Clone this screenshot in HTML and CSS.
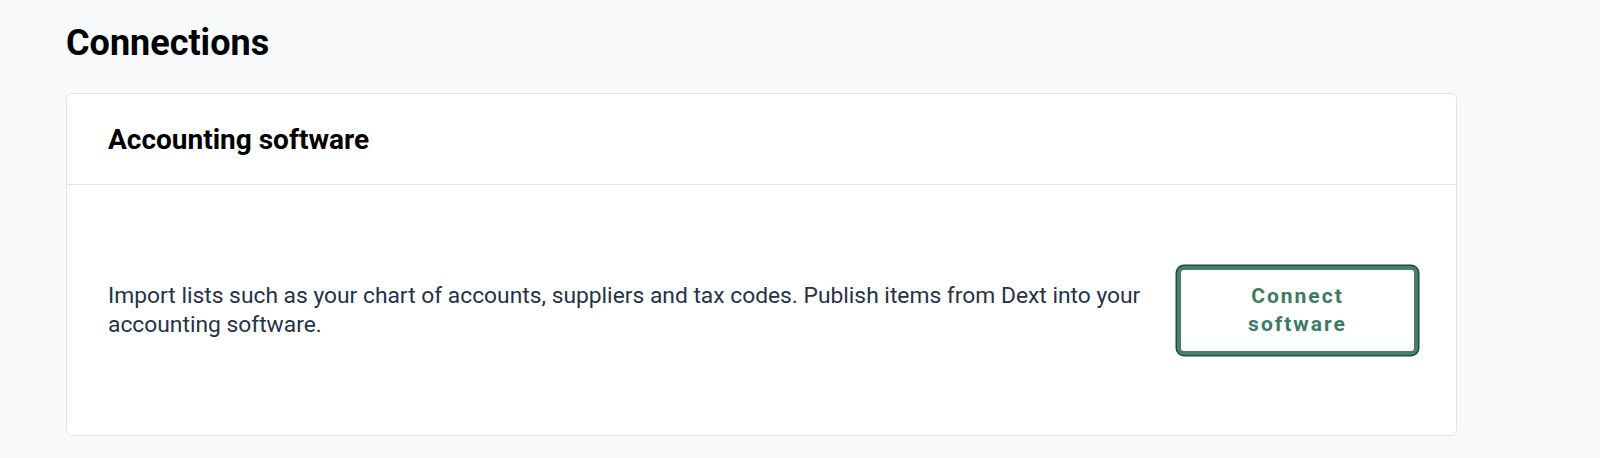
FILE: index.html
```html
<!DOCTYPE html>
<html lang="en">
<head>
<meta charset="utf-8">
<title>Connections</title>
<link rel="stylesheet" href="styles.css">
</head>
<body>
<main class="page">
  <h1 class="page-title">Connections</h1>
  <section class="card">
    <header class="card-header">
      <h2 class="card-title">Accounting software</h2>
    </header>
    <div class="card-body">
      <p class="card-text">Import lists such as your chart of accounts, suppliers and tax codes. Publish items from Dext into your accounting software.</p>
      <button class="btn-connect" type="button">Connect software</button>
    </div>
  </section>
</main>
</body>
</html>
```
FILE: styles.css
```css
* { box-sizing: border-box; }
html, body {
  margin: 0;
  padding: 0;
  background: #f8f9fb;
  font-family: Roboto, "Liberation Sans", Arial, sans-serif;
}
.page {
  padding: 21px 0 0 66px;
}
.page-title {
  margin: 0 0 28px;
  font-size: 36px;
  line-height: 44px;
  font-weight: 700;
  color: #000;
}
.card {
  width: 1391px;
  background: #fff;
  border: 1px solid #e1e3e9;
  border-radius: 6px;
}
.card-header {
  height: 91px;
  display: flex;
  align-items: center;
  padding: 0 41px;
  border-bottom: 1px solid #e1e3e9;
}
.card-title {
  margin: 0;
  font-size: 28px;
  font-weight: 700;
  color: #000;
}
.card-body {
  height: 250px;
  display: flex;
  align-items: center;
  justify-content: space-between;
  gap: 30px;
  padding: 0 38px 0 41px;
}
.card-text {
  margin: 0;
  flex: 1 1 auto;
  font-size: 22.8px;
  line-height: 29px;
  color: #263247;
}
.btn-connect {
  flex: none;
  width: 241px;
  height: 89px;
  padding: 0 30px;
  background: #fff;
  border: 4px solid #4a8068;
  border-radius: 7px;
  box-shadow: 0 0 0 1.5px #1f4c3a;
  color: #3d7a62;
  font-family: inherit;
  font-size: 21px;
  font-weight: 700;
  letter-spacing: 2px;
  line-height: 28px;
  text-align: center;
  cursor: pointer;
}
```
